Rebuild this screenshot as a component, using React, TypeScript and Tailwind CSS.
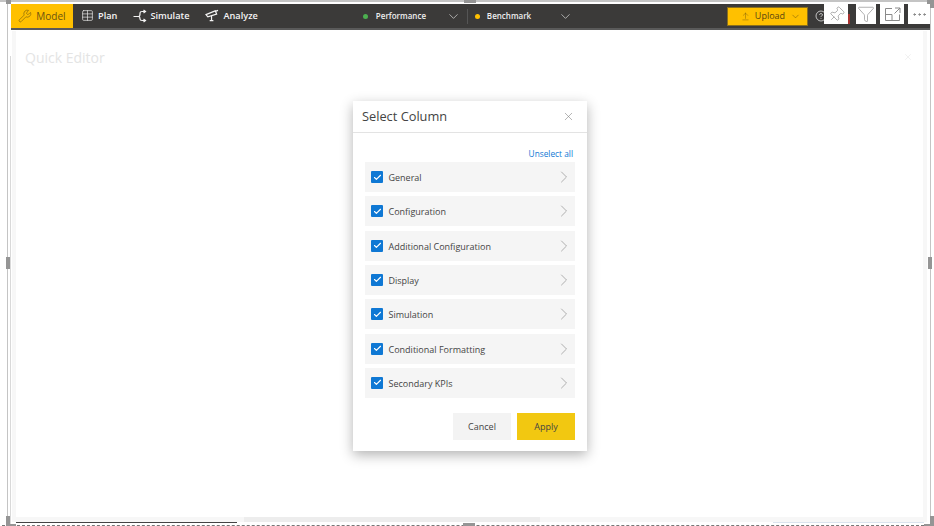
import React from 'react';
import { ChevronDown, ChevronRight, Check, X, Wrench, Table, Pin, Filter, MoreHorizontal, CircleHelp, ArrowUpFromLine } from 'lucide-react';

const columns = [
  'General',
  'Configuration',
  'Additional Configuration',
  'Display',
  'Simulation',
  'Conditional Formatting',
  'Secondary KPIs',
];

const SimulateIcon = () => (
  <svg width="14" height="14" viewBox="0 0 14 14" fill="none" stroke="currentColor" strokeWidth="1.2">
    <path d="M0.5 7.5H5.5M5.5 7.5C6.5 7.5 7 6.5 7 5V4C7 3 7.8 2.5 9 2.5H12.5M5.5 7.5C6.5 7.5 7 8.5 7 10C7 11 7.8 11.5 9 11.5H12.5" />
    <path d="M10.5 1L12.5 2.5L10.5 4M10.5 10L12.5 11.5L10.5 13" />
  </svg>
);

const AnalyzeIcon = () => (
  <svg width="14" height="13" viewBox="0 0 15 14" fill="none" stroke="currentColor" strokeWidth="1.3">
    <path d="M1 6L11 2L12.5 5.5L3 8.5Z" />
    <path d="M11 2.5L14 1.5M7 7.5V12.5M5 12.5H9" />
  </svg>
);

const FocusIcon = () => (
  <svg width="17" height="15" viewBox="0 0 17 15" fill="none" stroke="#8a8a8a" strokeWidth="1">
    <path d="M8 1.5H1.5V13.5H15.5V7.5M1.5 7.5H8V13.5M11 1H16V6M16 1L10.5 6.5" />
  </svg>
);

const NavItem = ({ icon, label, gap }: { icon: React.ReactNode; label: string; gap: string }) => (
  <div className={`flex items-center ${gap} text-[9.2px] font-semibold text-[#f3f3f3]`}>
    {icon}
    <span>{label}</span>
  </div>
);

const ColumnRow = ({ label }: { label: string }) => (
  <div className="flex h-[30px] items-center bg-[#f5f5f5] pl-[6px] pr-px">
    <div className="flex h-[12px] w-[12px] items-center justify-center rounded-[1px] bg-[#0f78d4]">
      <Check size={9} strokeWidth={3} className="text-white" />
    </div>
    <span className="ml-[5.5px] flex-1 pt-[1.5px] text-[9px] text-[#444]">{label}</span>
    <ChevronRight size={20} strokeWidth={1} className="text-[#a0a0a0]" />
  </div>
);

export default function App() {
  return (
    <div className="relative h-[526px] w-[934px] overflow-hidden bg-white font-['Open_Sans',sans-serif]">
      {/* selection frame of the visual */}
      <div className="absolute left-0 right-[3px] top-0 h-[2px] bg-[#c4c4c4]" />
      <div className="absolute bottom-0 left-[7px] top-0 w-px bg-[#c4c4c4]" />
      <div className="absolute bottom-0 left-[10px] top-[56px] w-px bg-[#d9d9d9]" />
      <div className="absolute bottom-0 right-[3px] top-0 w-px bg-[#c4c4c4]" />
      <div className="absolute bottom-0 left-[2px] right-0 h-px border-b border-dashed border-[#777]" />
      <div className="absolute left-[6px] top-0 h-[4px] w-[5px] bg-[#959595]" />
      <div className="absolute right-0 top-0 h-[8px] w-[7px] bg-[#959595]" />
      <div className="absolute left-[464px] top-0 h-[3px] w-[12px] bg-[#959595]" />
      <div className="absolute left-[6px] top-[257px] h-[12px] w-[4px] bg-[#959595]" />
      <div className="absolute right-[2px] top-[257px] h-[12px] w-[4px] bg-[#959595]" />
      <div className="absolute bottom-px left-[6px] h-[9px] w-[4px] bg-[#959595]" />
      <div className="absolute bottom-0 left-[6px] h-[2px] w-[10px] bg-[#959595]" />
      <div className="absolute bottom-px right-0 h-[9px] w-[4px] bg-[#959595]" />
      <div className="absolute bottom-0 right-0 h-[2px] w-[10px] bg-[#959595]" />
      <div className="absolute bottom-0 left-[463px] h-[3px] w-[12px] bg-[#959595]" />
      <div className="absolute bottom-[3px] left-[16px] h-px w-[221px] bg-[#444]" />
      <div className="absolute bottom-[3px] right-[10px] h-px w-[151px] bg-[#dbe4ee]" />

      <div className="ml-[11px] mr-[4px] flex flex-col pt-[4px]">
        {/* toolbar */}
        <div className="flex h-[26px] items-center border-b-2 border-[#5a5a5a] bg-[#3b3a39]">
          <div className="flex h-full w-[62px] items-center justify-center gap-[4px] bg-[#ffc000] text-[10px] text-[#6b5310]">
            <Wrench size={14} strokeWidth={1} />
            <span>Model</span>
          </div>
          <div className="ml-[8px] flex items-center gap-[16px]">
            <NavItem gap="gap-[4px]" icon={<Table size={13} strokeWidth={1.2} />} label="Plan" />
            <NavItem gap="gap-[3px]" icon={<SimulateIcon />} label="Simulate" />
            <NavItem gap="gap-[4px]" icon={<AnalyzeIcon />} label="Analyze" />
          </div>
          <div className="ml-[105px] flex w-[98px] items-center">
            <span className="h-[5px] w-[5px] rounded-full bg-[#4caf50]" />
            <span className="ml-[8px] flex-1 text-[8px] font-semibold text-[#eee]">Performance</span>
            <ChevronDown size={15} strokeWidth={1} className="text-[#eee]" />
          </div>
          <div className="ml-[6px] mr-[7px] h-[15px] w-px bg-[#555]" />
          <div className="flex w-[98px] items-center">
            <span className="h-[5px] w-[5px] rounded-full bg-[#ffc000]" />
            <span className="ml-[7px] flex-1 text-[8px] font-semibold text-[#eee]">Benchmark</span>
            <ChevronDown size={15} strokeWidth={1} className="text-[#eee]" />
          </div>
          <div className="ml-[154px] flex h-[19px] w-[81px] items-center justify-start gap-[5px] border border-[#8a6f1c] bg-[#ffc000] pl-[13px] text-[9px] text-[#5a4510]">
            <ArrowUpFromLine size={9} strokeWidth={1} />
            <span>Upload</span>
            <ChevronDown size={11} strokeWidth={1} />
          </div>
          <CircleHelp size={12} strokeWidth={1.5} className="ml-[7px] text-[#eee]" />
        </div>

        {/* faded editor behind the dialog */}
        <div className="relative mt-[1px] ml-px mr-[3px] flex h-[491px] items-start justify-between border-b-[5px] border-l-4 border-r-4 border-[#f7f7f7] pl-[9px] pr-[10px] pt-[17px]">
          <span className="text-[14px] leading-[20px] text-[#e4e4e4]">Quick Editor</span>
          <X size={10} strokeWidth={1} className="mt-[4px] text-[#dedede]" />
          <div className="absolute bottom-[-5px] left-[228px] h-[5px] w-[296px] bg-[#ededed]" />
        </div>
      </div>

      {/* toolbar hover icons */}
      <div className="absolute left-[824px] top-[4px] flex h-[20px] items-center">
        <div className="flex h-[20px] w-[24px] items-center justify-center bg-white">
          <Pin size={17} strokeWidth={0.9} className="rotate-45 text-[#8a8a8a]" />
        </div>
        <div className="h-[10px] w-[2px] self-end bg-[#a8322f]" />
        <div className="ml-[6px] flex h-[20px] w-[20px] items-center justify-center bg-white">
          <Filter size={18} strokeWidth={0.9} className="text-[#8a8a8a]" />
        </div>
        <div className="ml-[4px] flex h-[20px] w-[24px] items-center justify-center bg-white">
          <FocusIcon />
        </div>
        <div className="ml-[4px] flex h-[20px] w-[22px] items-center justify-center bg-white">
          <MoreHorizontal size={17} strokeWidth={1.4} className="text-[#777]" />
        </div>
      </div>

      {/* dialog */}
      <div className="absolute left-[353px] top-[101px] flex h-[350px] w-[234px] flex-col bg-white shadow-[0_4px_12px_rgba(0,0,0,0.3)]">
        <div className="flex h-[32px] items-center justify-between border-b border-[#e3e3e3] pl-[9px] pr-[12px]">
          <span className="pt-px text-[12.8px] text-[#444]">Select Column</span>
          <X size={13} strokeWidth={1} className="text-[#777]" />
        </div>
        <div className="flex flex-1 flex-col px-[12px]">
          <div className="mt-[14px] h-[15px] pr-[2px] text-right text-[8.3px] leading-[14px] text-[#0f78d4]">Unselect all</div>
          <div className="flex flex-col gap-[4.33px]">
            {columns.map((c) => (
              <ColumnRow key={c} label={c} />
            ))}
          </div>
          <div className="mt-[15px] flex justify-end gap-[6px]">
            <button className="h-[27px] w-[58px] bg-[#f3f3f3] text-[9px] text-[#444]">Cancel</button>
            <button className="h-[27px] w-[58px] bg-[#f2c811] text-[9px] text-[#444]">Apply</button>
          </div>
        </div>
      </div>
    </div>
  );
}
